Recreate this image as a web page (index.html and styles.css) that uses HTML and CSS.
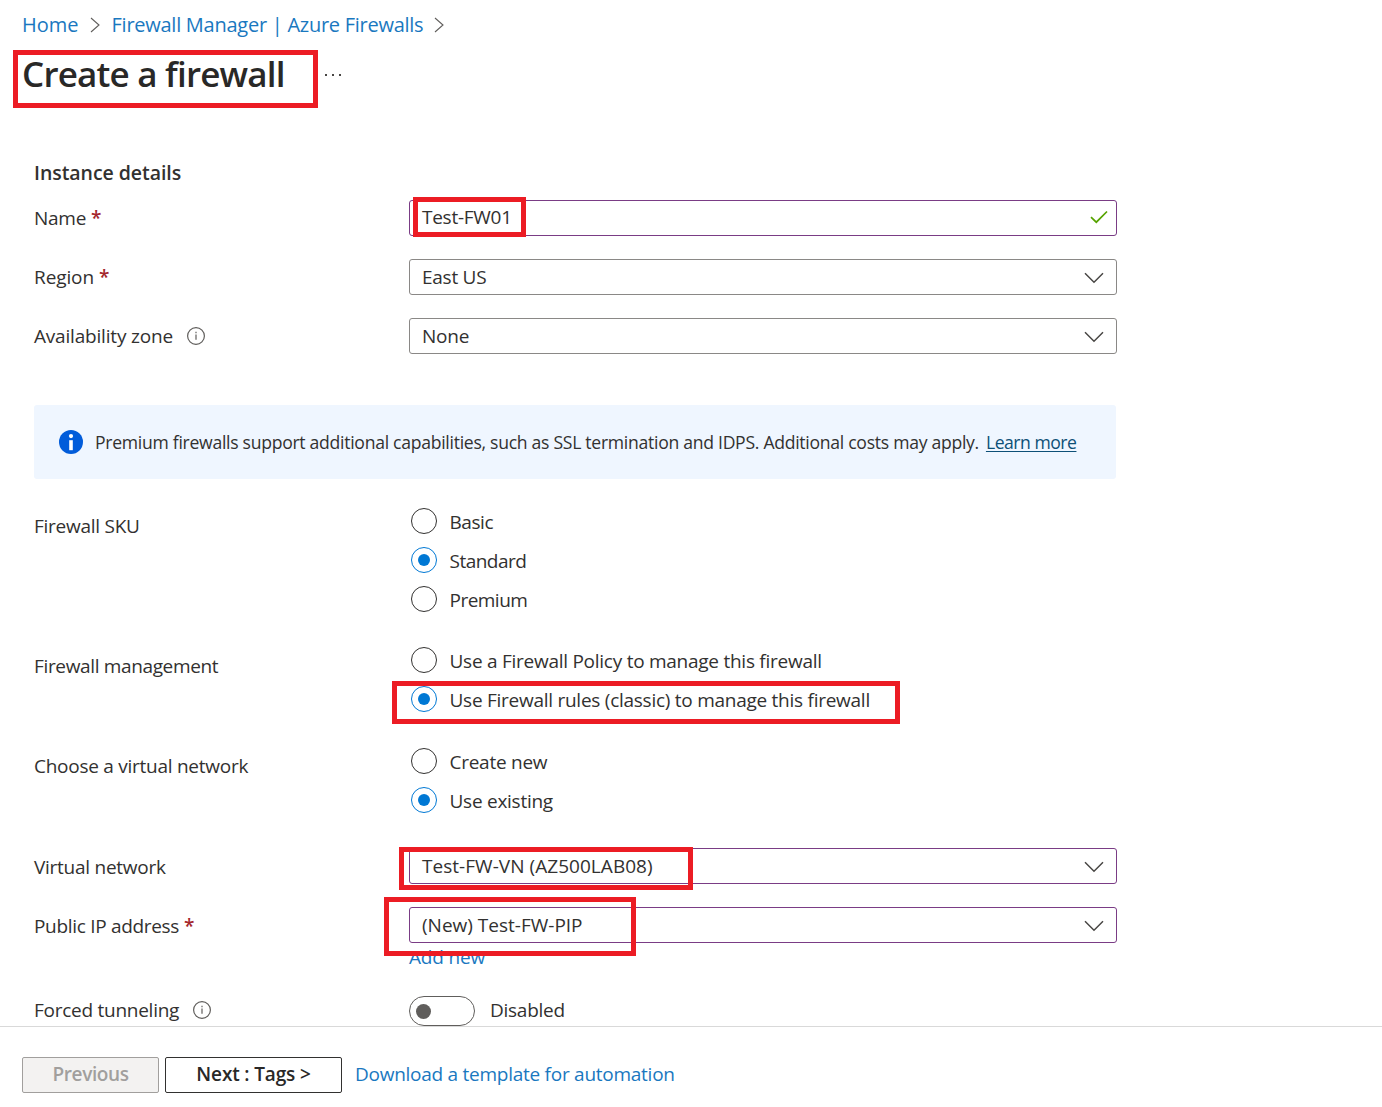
FILE: index.html
```html
<!DOCTYPE html>
<html lang="en">
<head>
<meta charset="utf-8">
<title>Create a firewall</title>
<link rel="stylesheet" href="styles.css">
</head>
<body>
<div class="page">
  <header class="header">
    <nav class="breadcrumb">
      <a class="crumb-home">Home</a>
      <svg class="crumb-sep" viewBox="0 0 10 16"><path d="M1 1l8 7-8 7"/></svg>
      <a class="crumb-parent">Firewall Manager | Azure Firewalls</a>
      <svg class="crumb-sep" viewBox="0 0 10 16"><path d="M1 1l8 7-8 7"/></svg>
    </nav>
    <div class="title-row">
      <h1>Create a firewall</h1>
      <svg class="more" viewBox="0 0 18 4"><path d="M1 1h2v2H1zM8 1h2v2H8zM15 1h2v2h-2z"/></svg>
      <span class="mark mark-title"></span>
    </div>
  </header>

  <main class="form">
    <h2>Instance details</h2>

    <div class="row">
      <label class="label"><span class="t-name">Name</span> <b class="req">*</b></label>
      <div class="field edited text"><span class="v-name">Test-FW01</span>
        <svg class="check" viewBox="0 0 18 14"><path d="M1 7.2l5.3 5L17 1.5"/></svg>
        <span class="mark mark-name"></span>
      </div>
    </div>
    <div class="row">
      <label class="label"><span class="t-region">Region</span> <b class="req">*</b></label>
      <div class="field"><span class="v-region">East US</span>
        <svg class="chevron" viewBox="0 0 20 12"><path d="M1 1.2l9 9 9-9"/></svg>
      </div>
    </div>
    <div class="row">
      <label class="label"><span class="t-zone">Availability zone</span>
        <svg class="info" viewBox="0 0 18 18"><circle cx="9" cy="9" r="8.4"/><path d="M9 7.6v5.2M9 4.8v1.5"/></svg>
      </label>
      <div class="field"><span class="v-zone">None</span>
        <svg class="chevron" viewBox="0 0 20 12"><path d="M1 1.2l9 9 9-9"/></svg>
      </div>
    </div>

    <div class="banner">
      <svg class="banner-icon" viewBox="0 0 24 24"><circle cx="12" cy="12" r="12"/><path d="M10.2 10.2h3.6v10h-3.6z"/><circle class="dot" cx="12" cy="6.1" r="2.1"/></svg>
      <span class="banner-text">Premium firewalls support additional capabilities, such as SSL termination and IDPS. Additional costs may apply.</span>
      <a class="learn">Learn more</a>
    </div>

    <div class="row choice sku">
      <span class="label"><span class="t-sku">Firewall SKU</span></span>
      <div class="radios">
        <label class="radio"><i></i><span class="r-basic">Basic</span></label>
        <label class="radio on"><i></i><span class="r-standard">Standard</span></label>
        <label class="radio"><i></i><span class="r-premium">Premium</span></label>
      </div>
    </div>
    <div class="row choice management">
      <span class="label"><span class="t-mgmt">Firewall management</span></span>
      <div class="radios">
        <label class="radio"><i></i><span class="r-policy">Use a Firewall Policy to manage this firewall</span></label>
        <label class="radio on"><i></i><span class="r-classic">Use Firewall rules (classic) to manage this firewall</span><span class="mark mark-classic"></span></label>
      </div>
    </div>
    <div class="row choice">
      <span class="label"><span class="t-choose">Choose a virtual network</span></span>
      <div class="radios">
        <label class="radio"><i></i><span class="r-create">Create new</span></label>
        <label class="radio on"><i></i><span class="r-existing">Use existing</span></label>
      </div>
    </div>

    <div class="row network">
      <label class="label"><span class="t-vnet">Virtual network</span></label>
      <div class="field edited"><span class="v-vnet">Test-FW-VN (AZ500LAB08)</span>
        <svg class="chevron" viewBox="0 0 20 12"><path d="M1 1.2l9 9 9-9"/></svg>
        <span class="mark mark-vnet"></span>
      </div>
    </div>
    <div class="row address">
      <label class="label"><span class="t-ip">Public IP address</span> <b class="req">*</b></label>
      <div class="field edited"><span class="v-ip">(New) Test-FW-PIP</span>
        <svg class="chevron" viewBox="0 0 20 12"><path d="M1 1.2l9 9 9-9"/></svg>
        <span class="mark mark-ip"></span>
      </div>
    </div>
    <div class="add-row"><a class="add">Add new</a></div>
    <div class="row tunneling">
      <label class="label"><span class="t-forced">Forced tunneling</span>
        <svg class="info" viewBox="0 0 18 18"><circle cx="9" cy="9" r="8.4"/><path d="M9 7.6v5.2M9 4.8v1.5"/></svg>
      </label>
      <div class="toggle"><i></i></div><span class="v-disabled">Disabled</span>
    </div>
  </main>

  <footer class="footer">
    <button class="btn previous" disabled>Previous</button>
    <button class="btn next">Next : Tags &gt;</button>
    <a class="download">Download a template for automation</a>
  </footer>
</div>
</body>
</html>
```
FILE: styles.css
```css
* { box-sizing: border-box; }
body {
  margin: 0;
  background: #fff;
  color: #323130;
  font: 19px/24px "Open Sans", "Noto Sans", sans-serif;
  letter-spacing: -0.26px;
}
.page { height: 1107px; display: flex; flex-direction: column; overflow: hidden; }
a { color: #1a78bf; white-space: nowrap; }
svg { display: block; flex: none; fill: none; }
span { white-space: nowrap; }

.header { padding: 13px 22px 0; }
.breadcrumb { display: flex; align-items: center; height: 24px; font-size: 20px; }
.crumb-home { letter-spacing: 0; }
.crumb-sep { width: 10px; height: 16px; stroke: #605e5c; stroke-width: 1.1; margin: 0 12px 1px 11px; }
.title-row { position: relative; display: flex; align-items: center; height: 48px; margin-top: 13px; }
h1 { margin: 0; font-size: 35px; line-height: 48px; font-weight: 600; letter-spacing: -0.8px; color: #292827; white-space: nowrap; }
.more { width: 18px; height: 4px; fill: #484644; margin: 1px 0 0 39px; }

.mark { position: absolute; border: 5px solid #ec1c24; pointer-events: none; }
.mark-title { left: -9px; top: 0; width: 305px; height: 58px; }
.mark-name { left: 3px; top: -4px; width: 113px; height: 40px; }
.mark-classic { left: -19px; top: 2px; width: 508px; height: 43px; }
.mark-vnet { left: -11px; top: -2px; width: 294px; height: 43px; }
.mark-ip { left: -26px; top: -11px; width: 252px; height: 59px; }

.form { padding: 63px 34px 0; height: 928px; }
h2 { margin: 0 0 15px; font-size: 19.5px; line-height: 24px; font-weight: 600; letter-spacing: -0.05px; }
.row { display: flex; align-items: center; height: 36px; margin-bottom: 23px; }
.label { width: 375px; display: flex; align-items: center; flex: none; }
.req { color: #a4262c; font-weight: 600; margin-left: 5px; }
.info { width: 18px; height: 18px; stroke: #605e5c; stroke-width: 1.2; margin-left: 14px; }
.field {
  position: relative;
  display: flex; align-items: center; justify-content: space-between;
  width: 708px; height: 36px; padding: 0 12px;
  border: 1px solid #8a8886; border-radius: 3px;
}
.field.edited { border-color: #7a3c85; }
.field.text { padding-bottom: 2px; }
.chevron { width: 20px; height: 12px; stroke: #484644; stroke-width: 1.5; margin-top: 2px; }
.check { width: 18px; height: 14px; stroke: #57a300; stroke-width: 1.7; margin-right: -4px; }
.t-region { letter-spacing: -0.1px; }
.t-zone, .v-zone { letter-spacing: -0.19px; }
.v-vnet { letter-spacing: 0.04px; }
.v-ip { letter-spacing: 0; }

.banner {
  display: flex; align-items: center;
  width: 1082px; height: 74px; margin: 51px 0 22px; padding-left: 25px;
  background: #eff6ff; border-radius: 3px;
  font-size: 17.6px; letter-spacing: -0.285px;
}
.banner-icon { width: 24px; height: 24px; fill: #015cda; margin-right: 12px; }
.banner-icon path, .banner-icon .dot { fill: #fff; }
.learn { color: #0d5077; letter-spacing: -0.48px; margin-left: 7px; text-decoration: underline; text-underline-offset: 2px; text-decoration-thickness: 1px; }

.choice { height: auto; align-items: flex-start; }
.choice .label { padding-top: 13px; }
.sku { margin-bottom: 22px; }
.management .label { padding-top: 14px; }
.radios { padding-left: 2px; }
.radio { position: relative; display: flex; align-items: center; height: 39px; }
.radio span:not(.mark) { padding-top: 2px; }
.radio i { width: 26px; height: 26px; border: 1px solid #323130; border-radius: 50%; margin-right: 12.5px; display: grid; place-items: center; }
.radio.on i { border-color: #0078d4; }
.radio.on i::after { content: ""; width: 12px; height: 12px; border-radius: 50%; background: #0078d4; }
.r-basic { letter-spacing: -0.45px; }
.r-standard, .r-premium { letter-spacing: -0.52px; }
.t-mgmt { letter-spacing: -0.35px; }

.network { margin-top: 29px; }
.network .label, .address .label { padding-top: 2px; }
.t-ip { letter-spacing: -0.31px; }
.address { margin-bottom: 2px; }
.add-row { height: 24px; padding-left: 375px; }
.add { letter-spacing: -0.17px; }
.tunneling { height: 30px; margin: 27px 0 0; }
.tunneling .label, .v-disabled { padding-bottom: 2px; }
.toggle { width: 66px; height: 30px; border: 1px solid #605e5c; border-radius: 15px; padding-left: 6px; display: flex; align-items: center; margin-right: 15px; }
.toggle i { width: 15px; height: 15px; border-radius: 50%; background: #605e5c; }

.footer { display: flex; align-items: flex-start; flex: 1; border-top: 1px solid #d9d9d9; padding: 30px 22px 0; background: #fff; }
.btn { height: 36px; padding: 0 0 2px; border: 1px solid #323130; border-radius: 2px; background: #fff; color: #292827; font: 600 19px/24px "Open Sans", "Noto Sans", sans-serif; letter-spacing: -0.15px; }
.previous { width: 137px; margin-right: 6px; background: #f3f2f1; border-color: #a19f9d; color: #a19f9d; letter-spacing: -0.4px; }
.next { width: 177px; margin-right: 13px; }
.download { padding-top: 5px; }
```
